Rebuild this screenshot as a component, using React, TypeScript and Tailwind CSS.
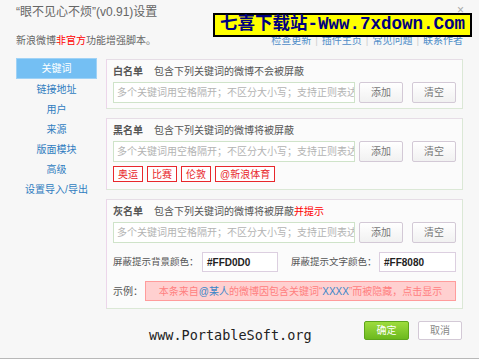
import React from 'react';

const FONT = { fontFamily: '"Liberation Sans", "Noto Sans CJK SC", sans-serif' };

const navItems = ['关键词', '链接地址', '用户', '来源', '版面模块', '高级', '设置导入/导出'];
const tags = ['奥运', '比赛', '伦敦', '@新浪体育'];
const links = ['检查更新', '插件主页', '常见问题', '联系作者'];

const PLACEHOLDER = '多个关键词用空格隔开；不区分大小写；支持正则表达式';

const Btn: React.FC<{ label: string }> = ({ label }) => (
    <button className="h-[21px] w-[44px] rounded-[2px] border border-[#d3c9d6] bg-gradient-to-b from-white to-[#f1f1f1] text-[10px] leading-none text-[#777]">
        {label}
    </button>
);

const KeywordInput: React.FC = () => (
    <div className="flex items-center gap-[4px]">
        <div className="flex h-[21px] min-w-0 flex-1 items-center overflow-hidden whitespace-nowrap border border-[#cfe3c9] bg-white pl-[3px] text-[10px] text-[#b3b3b3]">
            {PLACEHOLDER}
        </div>
        <Btn label="添加" />
        <div className="w-[1px]" />
        <Btn label="清空" />
    </div>
);

const PanelTitle: React.FC<{ title: string; children: React.ReactNode }> = ({ title, children }) => (
    <div className="flex h-[14px] items-center text-[10px] leading-[14px]">
        <span className="w-[41px] font-bold text-[#555]">{title}</span>
        <span className="text-[#555]">{children}</span>
    </div>
);

const Panel: React.FC<{ className?: string; children: React.ReactNode }> = ({ className, children }) => (
    <section className={`border border-[#dbe8d6] border-l-[#ecd6ea] border-t-[#e6dde6] bg-[#fbfbfb] pl-[6px] pr-[6px] pt-[5px] ${className ?? ''}`}>
        {children}
    </section>
);

export default function App() {
    return (
        <div className="relative h-[359px] w-[479px] overflow-hidden border-b border-[#b8b8b8] bg-[#f7f7f7]" style={FONT}>
            {/* header */}
            <div className="h-[34px] pl-4 pt-[5px] text-[12px] leading-[14px] text-[#666]">
                “眼不见心不烦”(v0.91)设置
            </div>
            <span className="absolute left-[457px] top-[4px] text-[12px] leading-none text-[#aaa]">×</span>

            <div className="flex h-[14px] items-center justify-between pl-4 pr-4 text-[10px] leading-[14px]">
                <div className="text-[#666]">
                    新浪微博<span className="text-[#f00]">非官方</span>功能增强脚本。
                </div>
                <div className="flex items-center text-[#4f8dc8]">
                    {links.map((l, i) => (
                        <React.Fragment key={l}>
                            {i > 0 && <span className="mx-[4px] text-[#d0d0d0]">|</span>}
                            <span>{l}</span>
                        </React.Fragment>
                    ))}
                </div>
            </div>

            {/* main */}
            <div className="mt-[10px] flex">
                <nav className="ml-4 w-[81px] text-center text-[10px]">
                    {navItems.map((n, i) => (
                        <div
                            key={n}
                            className={
                                i === 0
                                    ? 'flex h-[21px] items-center justify-center border border-[#9fd2f6] bg-[#74bff3] text-white'
                                    : 'flex h-[20px] items-center justify-center text-[#2f7cc0]'
                            }
                        >
                            {n}
                        </div>
                    ))}
                </nav>

                <div className="ml-[9px] mt-[1px] flex w-[357px] flex-col gap-[9px]">
                    <Panel className="pb-[5px]">
                        <PanelTitle title="白名单">包含下列关键词的微博不会被屏蔽</PanelTitle>
                        <div className="mt-[3px]">
                            <KeywordInput />
                        </div>
                    </Panel>

                    <Panel className="pb-[7px]">
                        <PanelTitle title="黑名单">包含下列关键词的微博将被屏蔽</PanelTitle>
                        <div className="mt-[3px]">
                            <KeywordInput />
                        </div>
                        <div className="mt-[4px] flex gap-[4px]">
                            {tags.map((t) => (
                                <span
                                    key={t}
                                    className="flex h-[16px] items-center border border-[#e8282c] bg-white px-[4px] text-[10px] text-[#e8282c]"
                                >
                                    {t}
                                </span>
                            ))}
                        </div>
                    </Panel>

                    <Panel className="pb-[7px]">
                        <PanelTitle title="灰名单">
                            包含下列关键词的微博将被屏蔽<span className="text-[#f00]">并提示</span>
                        </PanelTitle>
                        <div className="mt-[3px]">
                            <KeywordInput />
                        </div>
                        <div className="mt-[9px] flex h-[20px] items-center whitespace-nowrap text-[10px] text-[#555]">
                            <span className="w-[89px] text-[9.5px]">屏蔽提示背景颜色：</span>
                            <div className="flex h-[20px] w-[76px] items-center border border-[#dccfe0] bg-white pl-[4px] font-bold text-[#222]">
                                #FFD0D0
                            </div>
                            <span className="ml-[13px] w-[88px] text-[9.5px]">屏蔽提示文字颜色：</span>
                            <div className="flex h-[20px] w-[77px] items-center border border-[#dccfe0] bg-white pl-[4px] font-bold text-[#222]">
                                #FF8080
                            </div>
                        </div>
                        <div className="mt-[9px] flex h-[20px] items-center whitespace-nowrap text-[10px]">
                            <span className="w-[32px] text-[#555]">示例：</span>
                            <div className="flex h-[20px] flex-1 items-center justify-center border border-[#ff9c9c] bg-[#ffd0d0] text-[#ff8080]">
                                本条来自<span className="text-[#3a86c8]">@某人</span>的微博因包含关键词“<span className="text-[#3a86c8]">XXXX</span>”而被隐藏，点击显示
                            </div>
                        </div>
                    </Panel>
                </div>
            </div>

            {/* footer */}
            <div className="mt-[12px] flex items-start">
                <span
                    className="ml-[149px] mt-[6px] text-[13.5px] leading-[16px] text-[#222]"
                    style={{ fontFamily: '"DejaVu Sans Mono", "Liberation Mono", monospace' }}
                >
                    www.PortableSoft.org
                </span>
                <button className="ml-auto h-[19px] w-[45px] rounded-[2px] border border-[#5ea51c] bg-gradient-to-b from-[#9ddc3c] to-[#6cb91e] text-[10px] leading-none text-white">
                    确定
                </button>
                <button className="ml-[9px] mr-[17px] h-[19px] w-[44px] rounded-[2px] border border-[#d3c9d6] bg-white text-[10px] leading-none text-[#888]">
                    取消
                </button>
            </div>

            {/* watermark */}
            <div
                className="absolute left-[213px] top-[13px] flex h-[24px] w-[259px] items-center justify-center border-2 border-black bg-[#ffff00] text-[17.5px] font-bold leading-none text-[#000080]"
                style={{ fontFamily: '"Liberation Mono", "Noto Sans CJK SC", monospace' }}
            >
                七喜下载站-Www.7xdown.Com
            </div>
        </div>
    );
}
